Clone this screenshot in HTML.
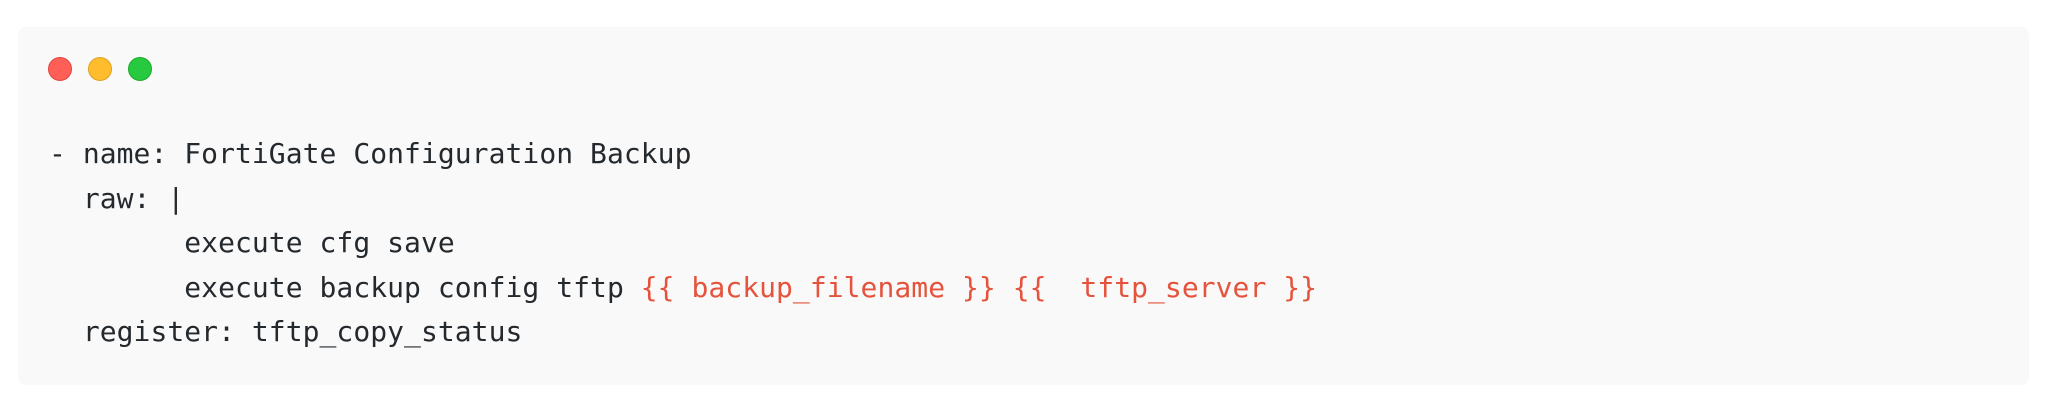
<!DOCTYPE html>
<html><head><meta charset="utf-8"><style>
html,body{margin:0;padding:0;background:#fff;width:2048px;height:410px;overflow:hidden}
.box{position:absolute;left:18px;top:27px;width:2011px;height:358px;background:#f9f9f9;border-radius:8px}
.dot{position:absolute;top:57px;width:24px;height:24px;border-radius:50%;box-sizing:border-box}
.code{position:absolute;left:49px;top:132px;font-family:"DejaVu Sans Mono","Liberation Mono",monospace;font-size:28px;letter-spacing:0.05px;line-height:44.5px;color:#24292e;white-space:pre}
.r{color:#e5533d}
</style></head><body>
<div class="box"></div>
<div class="dot" style="left:48px;background:#ff5f56;border:1px solid #e0443e"></div>
<div class="dot" style="left:88px;background:#ffbd2e;border:1px solid #dea123"></div>
<div class="dot" style="left:128px;background:#27c93f;border:1px solid #1aab29"></div>
<div class="code">- name: FortiGate Configuration Backup
  raw: |
        execute cfg save
        execute backup config tftp <span class="r">{{ backup_filename }}</span> <span class="r">{{  tftp_server }}</span>
  register: tftp_copy_status</div>
</body></html>
